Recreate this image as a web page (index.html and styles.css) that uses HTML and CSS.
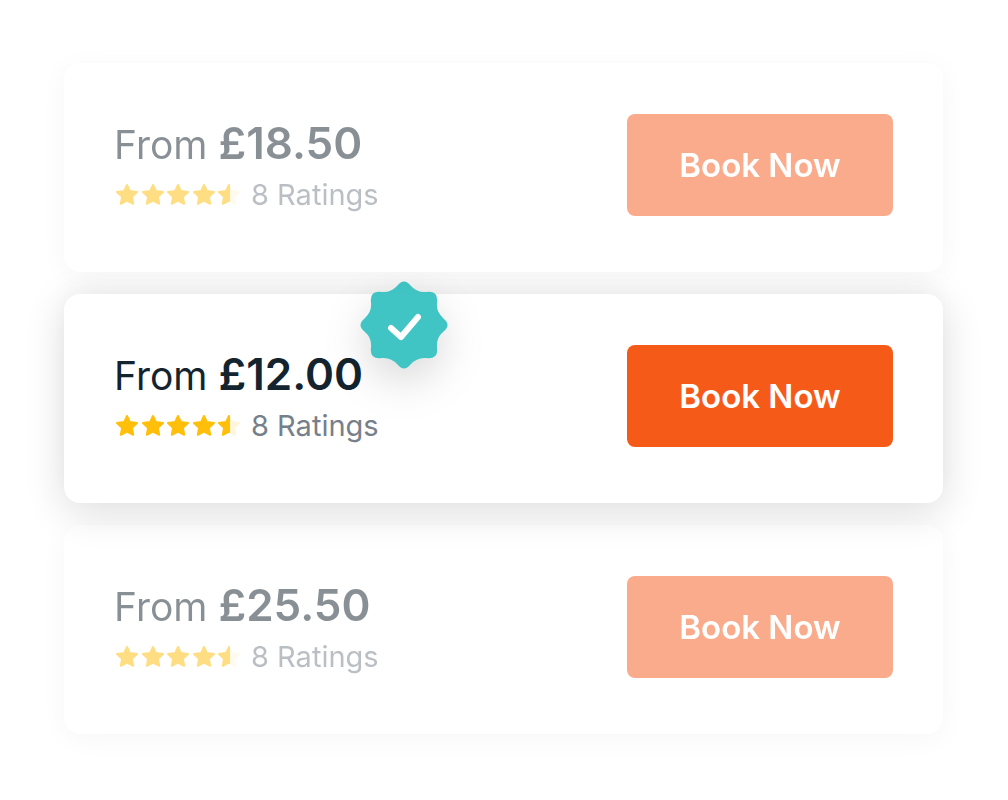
FILE: index.html
```html
<!DOCTYPE html>
<html lang="en">
<head>
  <meta charset="UTF-8">
  <title>Compare Prices</title>
  <link rel="stylesheet" href="styles.css">
</head>

<body>

  <!-- Star row shared by all the offers -->
  <svg class="defs" width="0" height="0" aria-hidden="true">
    <defs>
      <path id="star" d="M0 -10 L2.9 -3.9 L10 -3 L4.9 1.9 L6.2 8.8 L0 5.5 L-6.2 8.8 L-4.9 1.9 L-10 -3 L-2.9 -3.9 Z"/>
      <clipPath id="leftHalf"><rect x="-12" y="-12" width="13" height="24"/></clipPath>
      <g id="stars" stroke-width="2" stroke-linejoin="round">
        <use href="#star" x="13" y="13"/>
        <use href="#star" x="39" y="13"/>
        <use href="#star" x="64" y="13"/>
        <use href="#star" x="90" y="13"/>
        <use href="#star" x="115" y="13" opacity="0.15"/>
        <g transform="translate(115 13)"><use href="#star" clip-path="url(#leftHalf)"/></g>
      </g>
    </defs>
  </svg>

  <main class="offers">
    <section class="offer faded">
      <div class="details">
        <p class="price">From <strong>£18.50</strong></p>
        <p class="rating">
          <svg class="stars" viewBox="0 0 128 26" role="img" aria-label="4.5 stars"><use href="#stars"/></svg>
          8 Ratings
        </p>
      </div>
      <button type="button" class="btn">Book Now</button>
    </section>

    <section class="offer best">
      <div class="details">
        <p class="price">From <strong>£12.00</strong></p>
        <p class="rating">
          <svg class="stars" viewBox="0 0 128 26" role="img" aria-label="4.5 stars"><use href="#stars"/></svg>
          8 Ratings
        </p>
      </div>
      <button type="button" class="btn">Book Now</button>

      <!-- Best price badge -->
      <svg class="badge" viewBox="-45 -45 90 90" role="img" aria-label="Best price">
        <path fill="#40c4c4" d="M-6.5 -39.5 Q0 -47.5 6.5 -39.5 Q13 -32 22.3 -33 Q34.6 -34.6 33 -22.3 Q32 -13 39.5 -6.5 Q47.5 0 39.5 6.5 Q32 13 33 22.3 Q34.6 34.6 22.3 33 Q13 32 6.5 39.5 Q0 47.5 -6.5 39.5 Q-13 32 -22.3 33 Q-34.6 34.6 -33 22.3 Q-32 13 -39.5 6.5 Q-47.5 0 -39.5 -6.5 Q-32 -13 -33 -22.3 Q-34.6 -34.6 -22.3 -33 Q-13 -32 -6.5 -39.5 Z"/>
        <path fill="none" stroke="#fff" stroke-width="6" stroke-linecap="round" stroke-linejoin="round" d="M-13 3 L-3 12 L14 -8"/>
      </svg>
    </section>

    <section class="offer faded">
      <div class="details">
        <p class="price">From <strong>£25.50</strong></p>
        <p class="rating">
          <svg class="stars" viewBox="0 0 128 26" role="img" aria-label="4.5 stars"><use href="#stars"/></svg>
          8 Ratings
        </p>
      </div>
      <button type="button" class="btn">Book Now</button>
    </section>
  </main>

</body>
</html>
```
FILE: styles.css
```css
* { box-sizing: border-box; }

body {
  margin: 0;
  background: #fff;
  color: #14242f;
  font-family: Inter, "Liberation Sans", sans-serif;
}

.defs { position: absolute; }

/* List of offers */
.offers {
  display: flex;
  flex-direction: column;
  gap: 22px;
  padding: 63px 65px 63px 64px;
}

.offer {
  position: relative;
  display: flex;
  align-items: flex-start;
  justify-content: space-between;
  padding: 51px 50px 56px 50px;
  background: #fff;
  border-radius: 16px;
  box-shadow: 0 4px 28px rgba(0, 0, 0, 0.04);
}
.offer:first-child { z-index: 2; }
.offer.best {
  z-index: 1;
  box-shadow: 0 8px 40px rgba(0, 0, 0, 0.14), 0 -12px 20px rgba(0, 0, 0, 0.02);
}
.faded .details, .faded .btn { opacity: 0.5; }

/* Price and rating */
.price {
  margin: 4px 0 0;
  font-size: 39px;
  line-height: 50px;
}
.price strong {
  font-size: 44px;
  font-weight: 600;
}
.rating {
  display: flex;
  align-items: center;
  gap: 9px;
  margin: 5px 0 0;
  color: #77808a;
  font-size: 29px;
  line-height: 40px;
}
.stars {
  width: 128px;
  height: 26px;
  fill: #ffbf0a;
  stroke: #ffbf0a;
}

/* Buttons */
.btn {
  width: 266px;
  height: 102px;
  padding: 0;
  background: #f65a19;
  color: #fff;
  border: none;
  border-radius: 8px;
  font-family: inherit;
  font-size: 33px;
  font-weight: 600;
  cursor: pointer;
}

/* Badge sits over the top edge of the card */
.badge {
  position: absolute;
  top: -14px;
  left: 295px;
  width: 90px;
  height: 90px;
  overflow: visible;
  filter: drop-shadow(0 16px 20px rgba(0, 0, 0, 0.14));
}
```
